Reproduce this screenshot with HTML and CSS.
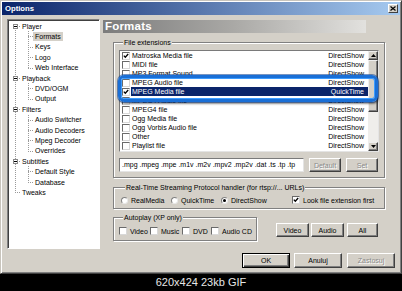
FILE: index.html
```html
<!DOCTYPE html>
<html>
<head>
<meta charset="utf-8">
<link rel="stylesheet" href="styles.css">
</head>
<body>
<div class="window">
  <div class="titlebar">
    <span class="title">Options</span>
    <span class="close"><svg width="6" height="5" viewBox="0 0 6 5"><path d="M0.5 0.5L5.5 4.5M5.5 0.5L0.5 4.5" stroke="#000" stroke-width="1.2" fill="none"/></svg></span>
  </div>
  <div class="content">
    <div class="tree">
      <ul class="roots">
        <li>
          <div class="node"><svg class="exp" width="5" height="5" viewBox="0 0 5 5"><rect x="0.5" y="0.5" width="4" height="4" fill="#fff" stroke="#8a8a8a"/><path d="M1 2.5h3" stroke="#000"/></svg><span>Player</span></div>
          <ul class="kids">
            <li class="leaf"><span class="lbl sel">Formats</span></li>
            <li class="leaf"><span class="lbl">Keys</span></li>
            <li class="leaf"><span class="lbl">Logo</span></li>
            <li class="leaf"><span class="lbl">Web Interface</span></li>
          </ul>
        </li>
        <li>
          <div class="node"><svg class="exp" width="5" height="5" viewBox="0 0 5 5"><rect x="0.5" y="0.5" width="4" height="4" fill="#fff" stroke="#8a8a8a"/><path d="M1 2.5h3" stroke="#000"/></svg><span>Playback</span></div>
          <ul class="kids">
            <li class="leaf"><span class="lbl">DVD/OGM</span></li>
            <li class="leaf"><span class="lbl">Output</span></li>
          </ul>
        </li>
        <li>
          <div class="node"><svg class="exp" width="5" height="5" viewBox="0 0 5 5"><rect x="0.5" y="0.5" width="4" height="4" fill="#fff" stroke="#8a8a8a"/><path d="M1 2.5h3" stroke="#000"/></svg><span>Filters</span></div>
          <ul class="kids">
            <li class="leaf"><span class="lbl">Audio Switcher</span></li>
            <li class="leaf"><span class="lbl">Audio Decoders</span></li>
            <li class="leaf"><span class="lbl">Mpeg Decoder</span></li>
            <li class="leaf"><span class="lbl">Overrides</span></li>
          </ul>
        </li>
        <li>
          <div class="node"><svg class="exp" width="5" height="5" viewBox="0 0 5 5"><rect x="0.5" y="0.5" width="4" height="4" fill="#fff" stroke="#8a8a8a"/><path d="M1 2.5h3" stroke="#000"/></svg><span>Subtitles</span></div>
          <ul class="kids">
            <li class="leaf"><span class="lbl">Default Style</span></li>
            <li class="leaf"><span class="lbl">Database</span></li>
          </ul>
        </li>
        <li>
          <div class="node plain"><span>Tweaks</span></div>
        </li>
      </ul>
    </div>

    <div class="page">
      <div class="header">Formats</div>

      <div class="group files">
        <div class="legend">File extensions</div>
        <div class="listbox">
          <div class="rows">
            <div class="row"><span class="cb on"><svg width="6" height="6" viewBox="0 0 6 6"><path d="M0.8 2.6L2.3 4.2L5.2 1" stroke="#000" stroke-width="1.3" fill="none"/></svg></span><span class="cell"><span>Matroska Media file</span><span>DirectShow</span></span></div>
            <div class="row"><span class="cb"></span><span class="cell"><span>MIDI file</span><span>DirectShow</span></span></div>
            <div class="row"><span class="cb"></span><span class="cell"><span>MP3 Format Sound</span><span>DirectShow</span></span></div>
            <div class="row"><span class="cb"></span><span class="cell"><span>MPEG Audio file</span><span>DirectShow</span></span></div>
            <div class="row sel"><span class="cb on"><svg width="6" height="6" viewBox="0 0 6 6"><path d="M0.8 2.6L2.3 4.2L5.2 1" stroke="#000" stroke-width="1.3" fill="none"/></svg></span><span class="cell"><span>MPEG Media file</span><span>QuickTime</span></span></div>
            <div class="row"><span class="cb"></span><span class="cell"><span>MPEG4 Audio file</span><span>DirectShow</span></span></div>
            <div class="row"><span class="cb"></span><span class="cell"><span>MPEG4 file</span><span>DirectShow</span></span></div>
            <div class="row"><span class="cb"></span><span class="cell"><span>Ogg Media file</span><span>DirectShow</span></span></div>
            <div class="row"><span class="cb"></span><span class="cell"><span>Ogg Vorbis Audio file</span><span>DirectShow</span></span></div>
            <div class="row"><span class="cb"></span><span class="cell"><span>Other</span><span>DirectShow</span></span></div>
            <div class="row"><span class="cb"></span><span class="cell"><span>Playlist file</span><span>DirectShow</span></span></div>
          </div>
          <div class="sb">
            <div class="arr"><svg width="5" height="3" viewBox="0 0 5 3"><path d="M2.5 0L5 3H0z" fill="#000"/></svg></div>
            <div class="thumb"></div>
            <div class="track"></div>
            <div class="arr"><svg width="5" height="3" viewBox="0 0 5 3"><path d="M0 0H5L2.5 3z" fill="#000"/></svg></div>
          </div>
          <div class="callout"></div>
        </div>
        <div class="extrow">
          <div class="textbox">.mpg .mpeg .mpe .m1v .m2v .mpv2 .mp2v .dat .ts .tp .tp</div>
          <button class="btn dis w32">Default</button>
          <button class="btn dis w32">Set</button>
        </div>
      </div>

      <div class="group rtsp">
        <div class="legend">Real-Time Streaming Protocol handler (for rtsp://... URLs)</div>
        <div class="optrow">
          <span class="opt w50"><span class="radio"></span>RealMedia</span>
          <span class="opt w50"><span class="radio"></span>QuickTime</span>
          <span class="opt w71"><span class="radio on"></span>DirectShow</span>
          <span class="opt"><span class="cb on"><svg width="6" height="6" viewBox="0 0 6 6"><path d="M0.8 2.6L2.3 4.2L5.2 1" stroke="#000" stroke-width="1.3" fill="none"/></svg></span>Look file extension first</span>
        </div>
      </div>

      <div class="autorow">
        <div class="group auto">
          <div class="legend">Autoplay (XP only)</div>
          <div class="optrow">
            <span class="opt w31"><span class="cb"></span>Video</span>
            <span class="opt w32"><span class="cb"></span>Music</span>
            <span class="opt w29"><span class="cb"></span>DVD</span>
            <span class="opt"><span class="cb"></span>Audio CD</span>
          </div>
        </div>
        <div class="btns">
          <button class="btn w33">Video</button>
          <button class="btn w33 g2">Audio</button>
          <button class="btn w31 g3">All</button>
        </div>
      </div>

      <div class="dlgbtns">
        <button class="btn def w48">OK</button>
        <button class="btn w48 g4">Anuluj</button>
        <button class="btn dis w48 g5">Zastosuj</button>
      </div>
    </div>
  </div>
</div>
<div class="caption">620x424 23kb GIF</div>
</body>
</html>
```

FILE: styles.css
```css
* { box-sizing: border-box; }
html, body { margin: 0; padding: 0; }
body {
  background: #000;
  width: 402px;
  height: 291px;
  overflow: hidden;
  font-family: "Liberation Sans", Arial, sans-serif;
  font-size: 7px;
  color: #000;
}
ul { list-style: none; margin: 0; padding: 0; }

.window {
  height: 274px;
  background: #d4d0c8;
  border: 1px solid;
  border-color: #c8c4bc #404040 #404040 #c8c4bc;
  box-shadow: inset 1px 1px #fff, inset -1px -1px #808080;
  padding: 1px;
  display: flex;
  flex-direction: column;
}
.titlebar {
  height: 13px;
  display: flex;
  align-items: center;
  justify-content: space-between;
  padding: 0 2px;
  background: linear-gradient(to right, #0a246a, #a6caf0);
}
.title { color: #fff; font-weight: bold; font-size: 7.7px; padding-left: 1px; }
.close {
  width: 10px;
  height: 9px;
  background: #d4d0c8;
  border: 1px solid;
  border-color: #fff #404040 #404040 #fff;
  display: flex;
  align-items: center;
  justify-content: center;
}

.content { display: flex; padding: 4px 0 0 5px; }

/* tree */
.tree {
  width: 93px;
  height: 230px;
  background: #fff;
  border: 1px solid;
  border-color: #808080 #fff #fff #808080;
  box-shadow: inset 1px 1px #404040;
  padding: 1px;
}
.roots {
  background-image: repeating-linear-gradient(to bottom, #9a9a9a 0 1px, transparent 1px 2px);
  background-repeat: no-repeat;
  background-position: 6px 5px;
  background-size: 1px calc(100% - 10px);
}
.node {
  height: 10.4px;
  display: flex;
  align-items: center;
  background-image: repeating-linear-gradient(to right, #9a9a9a 0 1px, transparent 1px 2px);
  background-repeat: no-repeat;
  background-position: 6px 5px;
  background-size: 6px 1px;
}
.node .exp { margin-left: 4px; margin-right: 4px; display: block; }
.node.plain span { margin-left: 13px; }
.kids {
  background-image: repeating-linear-gradient(to bottom, #9a9a9a 0 1px, transparent 1px 2px);
  background-repeat: no-repeat;
  background-position: 19px 0;
  background-size: 1px calc(100% - 5px);
}
.leaf {
  height: 10.4px;
  display: flex;
  align-items: center;
  padding-left: 24px;
  background-image: repeating-linear-gradient(to right, #9a9a9a 0 1px, transparent 1px 2px);
  background-repeat: no-repeat;
  background-position: 19px 5px;
  background-size: 5px 1px;
}
.lbl { padding: 0 2px; line-height: 9px; }
.lbl.sel { background: #d4d0c8; }

/* right page */
.page { margin-left: 3px; width: 292px; display: flex; flex-direction: column; }
.header {
  margin-top: 1px;
  width: 263px;
  height: 13px;
  line-height: 13px;
  padding-left: 2px;
  color: #fff;
  font-weight: bold;
  font-size: 11.5px;
  letter-spacing: 0.2px;
  background: linear-gradient(to right, #7c7c7c, #aaa9a6 50%, #e2e1de);
}
.group {
  border: 1px solid #808080;
  box-shadow: inset 1px 1px #fff, 1px 1px #fff;
  margin-left: 10px;
  width: 272px;
}
.legend {
  display: table;
  margin: -5px 0 0 4px;
  padding: 0 1px;
  height: 9px;
  line-height: 9px;
  background: #d4d0c8;
}
.files { margin-top: 9px; padding: 0 0 5px 5px; }

.listbox {
  position: relative;
  margin-top: 3px;
  width: 260px;
  height: 102px;
  display: flex;
  background: #fff;
  border: 1px solid;
  border-color: #7a7a7a #e4e4e4 #e4e4e4 #7a7a7a;
}
.rows { flex: 1; }
.row { height: 9px; display: flex; align-items: center; padding-left: 2px; }
.cell {
  flex: 1;
  height: 9px;
  line-height: 9px;
  display: flex;
  justify-content: space-between;
  padding: 0 4px 0 1px;
  margin-left: 1px;
  white-space: nowrap;
}
.row.sel .cell { background: #0a246a; color: #fff; }

.cb {
  width: 8px;
  height: 8px;
  flex: none;
  background: #fff;
  border: 1px solid;
  border-color: #6a6a6a #d8d8d8 #d8d8d8 #6a6a6a;
  display: flex;
  align-items: center;
  justify-content: center;
}
.cb svg { display: block; }
.radio {
  width: 7px;
  height: 7px;
  flex: none;
  border-radius: 50%;
  background: #fff;
  border: 1px solid;
  border-color: #808080 #e8e8e8 #e8e8e8 #808080;
  display: flex;
  align-items: center;
  justify-content: center;
}
.radio.on::after {
  content: "";
  width: 3px;
  height: 3px;
  border-radius: 50%;
  background: #000;
}

.sb { width: 10px; display: flex; flex-direction: column; background: #efeeeb; }
.arr, .thumb {
  background: #d4d0c8;
  border: 1px solid;
  border-color: #eeeeee #404040 #404040 #eeeeee;
  box-shadow: inset -1px -1px #808080;
}
.arr { height: 9px; display: flex; align-items: center; justify-content: center; }
.arr svg { display: block; }
.thumb { height: 52px; }
.track { flex: 1; }

.callout {
  position: absolute;
  left: -2px;
  top: 24px;
  width: 260px;
  height: 27px;
  border: 3px solid #1a6fd6;
  border-radius: 6px;
  box-shadow: inset 0 0 0 1px #3c9cff, 0 0 0 1px rgba(10, 60, 140, 0.55), 1px 2px 2px rgba(0, 0, 0, 0.45);
}

.extrow { display: flex; margin-top: 6px; height: 14px; }
.textbox {
  width: 185px;
  height: 14px;
  background: #fff;
  border: 1px solid;
  border-color: #7a7a7a #e4e4e4 #e4e4e4 #7a7a7a;
  padding-left: 2px;
  line-height: 12px;
  white-space: nowrap;
  overflow: hidden;
}
.extrow .btn { margin-left: 5px; height: 14px; }

.btn {
  font-family: inherit;
  font-size: 7px;
  color: #000;
  height: 14px;
  padding: 0;
  margin: 0;
  background: #d4d0c8;
  border: 1px solid;
  border-color: #fff #404040 #404040 #fff;
  box-shadow: inset -1px -1px #808080;
  display: flex;
  align-items: center;
  justify-content: center;
}
.btn.dis { color: #8a8a8a; text-shadow: 1px 1px #fff; }
.btn.def {
  border-color: #000;
  box-shadow: inset 1px 1px #fff, inset -1px -1px #404040, inset -2px -2px #808080;
}
.w31 { width: 31px; }
.w32 { width: 32px; }
.w33 { width: 33px; }
.w48 { width: 48px; }
.g2 { margin-left: 2px; }
.g3 { margin-left: 3px; }
.g4 { margin-left: 4px; }
.g5 { margin-left: 5px; }

.rtsp { margin-top: 9px; padding: 0 0 3px 7px; }
.optrow { display: flex; align-items: center; height: 10px; margin-top: 3px; white-space: nowrap; }
.opt { display: flex; align-items: center; gap: 3px; flex: none; }
.opt.w50 { width: 50px; }
.opt.w71 { width: 71px; }
.opt.w31 { width: 31px; }
.opt.w32 { width: 32px; }
.opt.w29 { width: 29px; }

.autorow { display: flex; margin-top: 8px; }
.auto { width: 144px; padding: 0 0 4px 5px; }
.auto .optrow { margin-top: 4px; }
.btns { display: flex; margin-left: 19px; margin-top: 6px; align-self: flex-start; }

.dlgbtns { display: flex; justify-content: flex-end; margin-top: 12px; }
.dlgbtns .btn { height: 15px; }

.caption {
  height: 17px;
  line-height: 17px;
  text-align: center;
  color: #e6e6e6;
  font-size: 11px;
}
```
